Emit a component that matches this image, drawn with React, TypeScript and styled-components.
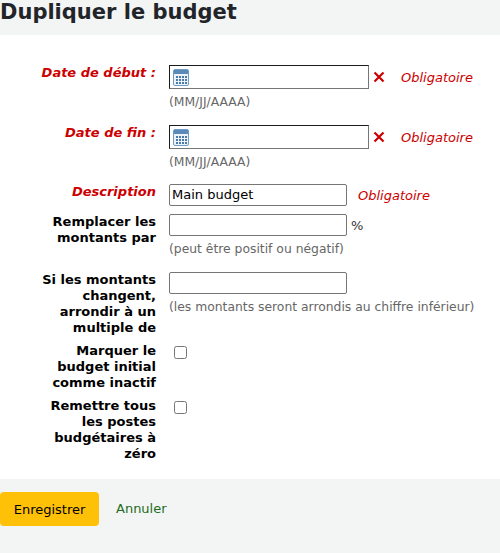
import React from 'react';
import styled, { createGlobalStyle } from 'styled-components';

const GlobalStyle = createGlobalStyle`
  html, body {
    margin: 0;
    padding: 0;
    background: #f3f4f4;
    font-family: 'DejaVu Sans', sans-serif;
    font-size: 13px;
    color: #000;
  }
`;

const Page = styled.div`
  width: 500px;
  height: 553px;
  overflow: hidden;
`;

const Title = styled.h1`
  margin: 0;
  height: 35px;
  font-size: 21px;
  line-height: 24px;
  font-weight: 700;
  color: #212529;
`;

const Fieldset = styled.div`
  background: #fff;
  height: 444px;
  box-sizing: border-box;
  padding-top: 30px;
`;

const Row = styled.div<{ $height: number }>`
  display: flex;
  height: ${(p) => p.$height}px;
`;

const Label = styled.div<{ $required?: boolean }>`
  width: 120px;
  margin: 0 13px 0 36px;
  flex: none;
  text-align: right;
  font-weight: 700;
  line-height: 16px;
  font-style: ${(p) => (p.$required ? 'italic' : 'normal')};
  color: ${(p) => (p.$required ? '#cc0000' : '#000')};
`;

const Field = styled.div`
  display: flex;
  flex-direction: column;
`;

const Inline = styled.div`
  display: flex;
  align-items: center;
`;

const DateInput = styled.div`
  width: 200px;
  height: 24px;
  box-sizing: border-box;
  border-style: solid;
  border-width: 1px;
  border-color: #1c1c1c #767676 #767676 #1c1c1c;
  display: flex;
  align-items: center;
  padding-left: 3px;
  background: #fff;
`;

const TextInput = styled.div<{ $width?: number }>`
  width: ${(p) => p.$width ?? 178}px;
  height: 22px;
  box-sizing: border-box;
  border: 1px solid #767676;
  border-radius: 2px;
  padding-left: 2px;
  line-height: 20px;
  background: #fff;
`;

const Cross = styled.svg`
  width: 12px;
  height: 12px;
  margin-left: 4px;
`;

const Required = styled.span<{ $gap: number }>`
  font-style: italic;
  color: #cc0000;
  margin-left: ${(p) => p.$gap}px;
`;

const Hint = styled.div`
  color: #666;
  font-size: 12.35px;
  line-height: 16px;
  margin-top: 5px;
`;

const Percent = styled.span`
  color: #333;
  margin-left: 4px;
`;

const Checkbox = styled.input.attrs({ type: 'checkbox' })`
  width: 13px;
  height: 13px;
  margin: 3px 0 0 5px;
`;

const Actions = styled.div`
  display: flex;
  align-items: center;
  margin-top: 13px;
`;

const SaveButton = styled.button`
  width: 99px;
  height: 34px;
  border: none;
  border-radius: 4px;
  background: #ffc107;
  color: #000;
  font: inherit;
  padding: 0;
`;

const CancelLink = styled.a`
  margin-left: 17px;
  margin-top: -2px;
  color: #1d6b1d;
  text-decoration: none;
`;

function CalendarIcon() {
  return (
    <svg width="16" height="17" viewBox="0 0 16 17">
      <rect x="0.5" y="0.5" width="15" height="16" rx="1.5" fill="#eef3f8" stroke="#6f9cc6" />
      <rect x="1" y="1" width="14" height="4" fill="#5b8ab8" />
      <g fill="#4b7aa8">
        {[7, 10, 13].map((y) =>
          [3, 6, 9, 12].map((x) => <rect key={`${x}-${y}`} x={x} y={y} width="2" height="2" />),
        )}
      </g>
    </svg>
  );
}

function RedCross() {
  return (
    <Cross viewBox="0 0 12 12">
      <path d="M1.5 1.5 L10.5 10.5 M10.5 1.5 L1.5 10.5" stroke="#cc0000" strokeWidth="2.2" />
    </Cross>
  );
}

function DateRow({ label, height }: { label: string; height: number }) {
  return (
    <Row $height={height}>
      <Label $required>{label}</Label>
      <Field>
        <Inline>
          <DateInput>
            <CalendarIcon />
          </DateInput>
          <RedCross />
          <Required $gap={16}>Obligatoire</Required>
        </Inline>
        <Hint>(MM/JJ/AAAA)</Hint>
      </Field>
    </Row>
  );
}

export default function App() {
  return (
    <Page>
      <GlobalStyle />
      <Title>Dupliquer le budget</Title>
      <Fieldset>
        <DateRow label="Date de début :" height={60} />
        <DateRow label="Date de fin :" height={59} />
        <Row $height={30}>
          <Label $required>Description</Label>
          <Field>
            <Inline>
              <TextInput>Main budget</TextInput>
              <Required $gap={11}>Obligatoire</Required>
            </Inline>
          </Field>
        </Row>
        <Row $height={58}>
          <Label>Remplacer les montants par</Label>
          <Field>
            <Inline>
              <TextInput />
              <Percent>%</Percent>
            </Inline>
            <Hint>(peut être positif ou négatif)</Hint>
          </Field>
        </Row>
        <Row $height={71}>
          <Label>Si les montants changent, arrondir à un multiple de</Label>
          <Field>
            <TextInput />
            <Hint>(les montants seront arrondis au chiffre inférieur)</Hint>
          </Field>
        </Row>
        <Row $height={55}>
          <Label>Marquer le budget initial comme inactif</Label>
          <Checkbox />
        </Row>
        <Row $height={64}>
          <Label>Remettre tous les postes budgétaires à zéro</Label>
          <Checkbox />
        </Row>
      </Fieldset>
      <Actions>
        <SaveButton>Enregistrer</SaveButton>
        <CancelLink href="#">Annuler</CancelLink>
      </Actions>
    </Page>
  );
}
